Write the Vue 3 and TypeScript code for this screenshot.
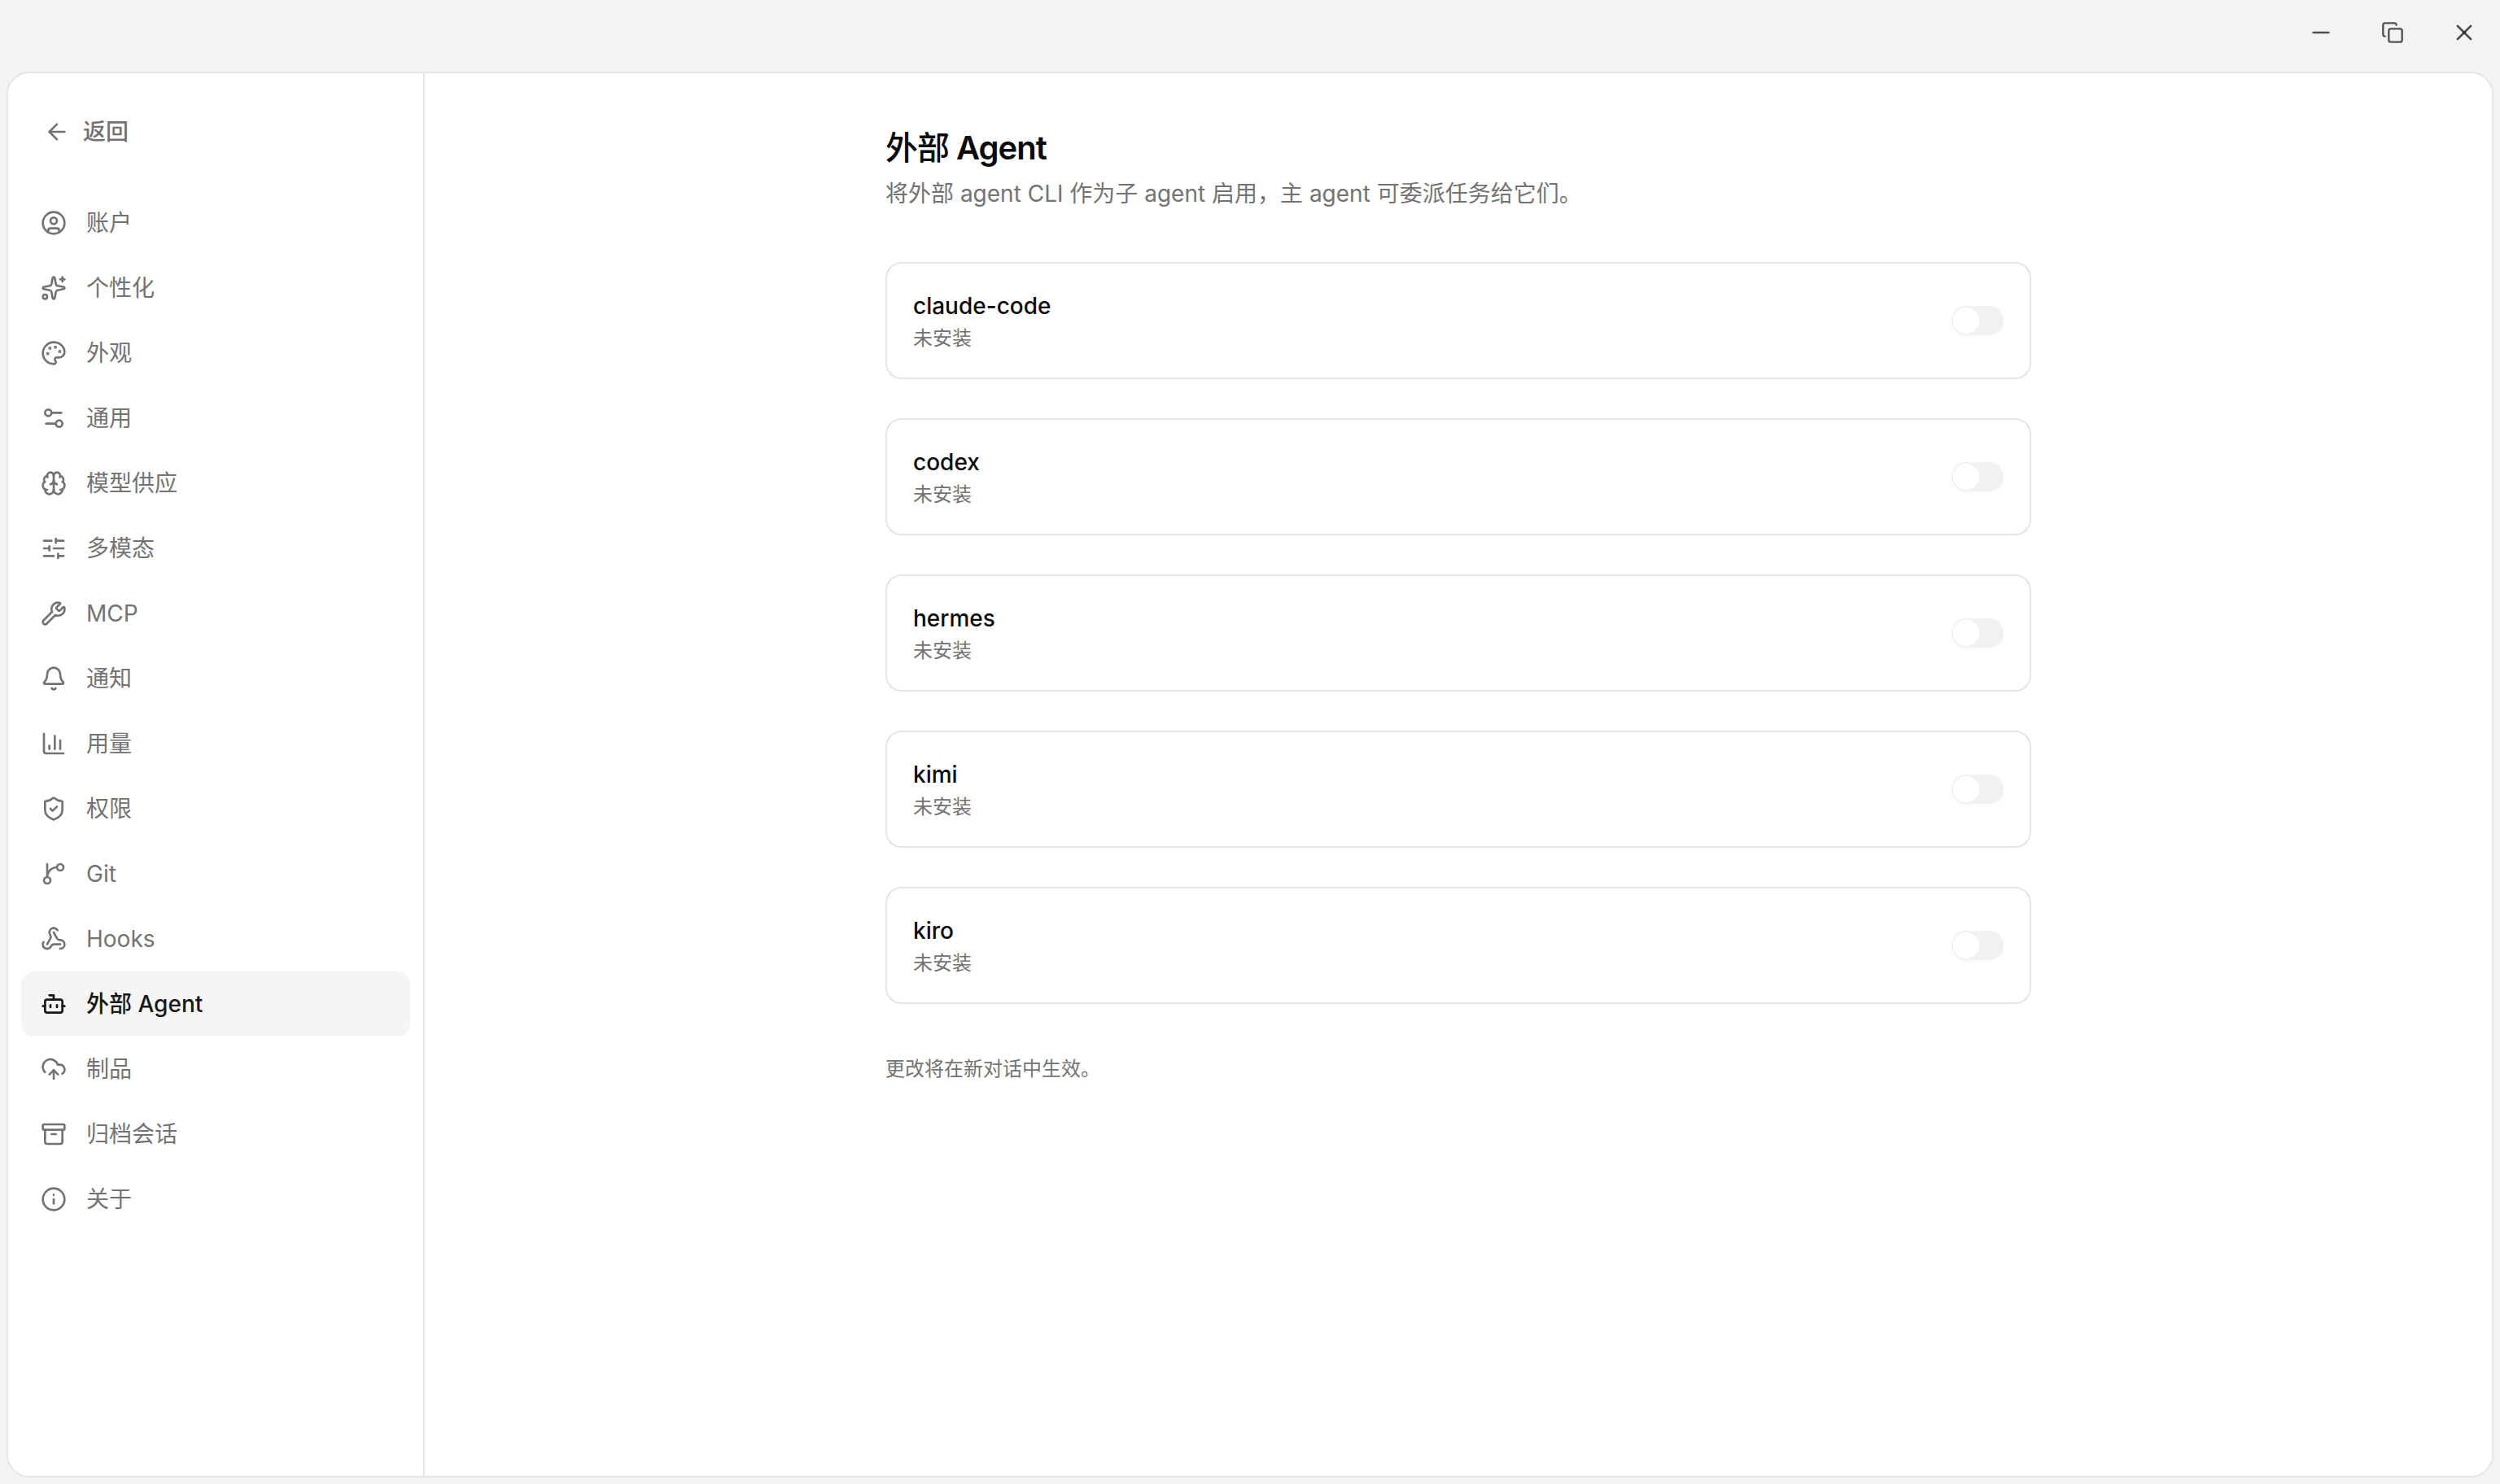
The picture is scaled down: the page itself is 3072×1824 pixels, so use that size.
<script setup lang="ts">
interface NavItem {
  label: string
  icon: string
  active?: boolean
}

const nav: NavItem[] = [
  {
    label: '账户',
    icon: '<circle cx="12" cy="12" r="10"/><circle cx="12" cy="10" r="3"/><path d="M7 20.662V19a2 2 0 0 1 2-2h6a2 2 0 0 1 2 2v1.662"/>',
  },
  {
    label: '个性化',
    icon: '<path d="M11.017 2.814a1 1 0 0 1 1.966 0l1.051 5.558a2 2 0 0 0 1.594 1.594l5.558 1.051a1 1 0 0 1 0 1.966l-5.558 1.051a2 2 0 0 0-1.594 1.594l-1.051 5.558a1 1 0 0 1-1.966 0l-1.051-5.558a2 2 0 0 0-1.594-1.594l-5.558-1.051a1 1 0 0 1 0-1.966l5.558-1.051a2 2 0 0 0 1.594-1.594z"/><path d="M20 2v4"/><path d="M22 4h-4"/><circle cx="4" cy="20" r="2"/>',
  },
  {
    label: '外观',
    icon: '<path d="M12 22a1 1 0 0 1 0-20 10 9 0 0 1 10 9 5 5 0 0 1-5 5h-2.25a1.75 1.75 0 0 0-1.4 2.8l.3.4a1.75 1.75 0 0 1-1.4 2.8z"/><circle cx="13.5" cy="6.5" r=".5" fill="currentColor"/><circle cx="17.5" cy="10.5" r=".5" fill="currentColor"/><circle cx="6.5" cy="12.5" r=".5" fill="currentColor"/><circle cx="8.5" cy="7.5" r=".5" fill="currentColor"/>',
  },
  {
    label: '通用',
    icon: '<path d="M14 17H5"/><path d="M19 7h-9"/><circle cx="17" cy="17" r="3"/><circle cx="7" cy="7" r="3"/>',
  },
  {
    label: '模型供应',
    icon: '<path d="M12 18V5"/><path d="M15 13a4.17 4.17 0 0 1-3-4 4.17 4.17 0 0 1-3 4"/><path d="M17.598 6.5A3 3 0 1 0 12 5a3 3 0 1 0-5.598 1.5"/><path d="M17.997 5.125a4 4 0 0 1 2.526 5.77"/><path d="M18 18a4 4 0 0 0 2-7.464"/><path d="M19.967 17.483A4 4 0 1 1 12 18a4 4 0 1 1-7.967-.517"/><path d="M6 18a4 4 0 0 1-2-7.464"/><path d="M6.003 5.125a4 4 0 0 0-2.526 5.77"/>',
  },
  {
    label: '多模态',
    icon: '<path d="M10 5H3"/><path d="M12 19H3"/><path d="M14 3v4"/><path d="M16 17v4"/><path d="M21 12h-9"/><path d="M21 19h-5"/><path d="M21 5h-7"/><path d="M8 10v4"/><path d="M8 12H3"/>',
  },
  {
    label: 'MCP',
    icon: '<path d="M14.7 6.3a1 1 0 0 0 0 1.4l1.6 1.6a1 1 0 0 0 1.4 0l3.106-3.105c.32-.322.863-.22.983.218a6 6 0 0 1-8.259 7.057l-7.91 7.91a1 1 0 0 1-2.999-3l7.91-7.91a6 6 0 0 1 7.057-8.259c.438.12.54.662.219.984z"/>',
  },
  {
    label: '通知',
    icon: '<path d="M10.268 21a2 2 0 0 0 3.464 0"/><path d="M3.262 15.326A1 1 0 0 0 4 17h16a1 1 0 0 0 .74-1.673C19.41 13.956 18 12.499 18 8A6 6 0 0 0 6 8c0 4.499-1.411 5.956-2.738 7.326"/>',
  },
  {
    label: '用量',
    icon: '<path d="M3 3v16a2 2 0 0 0 2 2h16"/><path d="M18 17V9"/><path d="M13 17V5"/><path d="M8 17v-3"/>',
  },
  {
    label: '权限',
    icon: '<path d="M20 13c0 5-3.5 7.5-7.66 8.95a1 1 0 0 1-.67-.01C7.5 20.5 4 18 4 13V6a1 1 0 0 1 1-1c2 0 4.5-1.2 6.24-2.72a1.17 1.17 0 0 1 1.52 0C14.51 3.81 17 5 19 5a1 1 0 0 1 1 1z"/><path d="m9 12 2 2 4-4"/>',
  },
  {
    label: 'Git',
    icon: '<path d="M15 6a9 9 0 0 0-9 9V3"/><circle cx="18" cy="6" r="3"/><circle cx="6" cy="18" r="3"/>',
  },
  {
    label: 'Hooks',
    icon: '<path d="M18 16.98h-5.99c-1.1 0-1.95.94-2.48 1.9A4 4 0 0 1 2 17c.01-.7.2-1.4.57-2"/><path d="m6 17 3.13-5.78c.53-.97.1-2.18-.5-3.1a4 4 0 1 1 6.89-4.06"/><path d="m12 6 3.13 5.73C15.66 12.7 16.9 13 18 13a4 4 0 0 1 0 8"/>',
  },
  {
    label: '外部 Agent',
    active: true,
    icon: '<path d="M12 8V4H8"/><rect width="16" height="12" x="4" y="8" rx="2"/><path d="M2 14h2"/><path d="M20 14h2"/><path d="M15 13v2"/><path d="M9 13v2"/>',
  },
  {
    label: '制品',
    icon: '<path d="M12 13v8"/><path d="M4 14.899A7 7 0 1 1 15.71 8h1.79a4.5 4.5 0 0 1 2.5 8.242"/><path d="m8 17 4-4 4 4"/>',
  },
  {
    label: '归档会话',
    icon: '<rect width="20" height="5" x="2" y="3" rx="1"/><path d="M4 8v11a2 2 0 0 0 2 2h12a2 2 0 0 0 2-2V8"/><path d="M10 12h4"/>',
  },
  {
    label: '关于',
    icon: '<circle cx="12" cy="12" r="10"/><path d="M12 16v-4"/><path d="M12 8h.01"/>',
  },
]

const agents: string[] = ['claude-code', 'codex', 'hermes', 'kimi', 'kiro']
</script>

<template>
  <div class="window">
    <header class="titlebar">
      <button class="win-btn" aria-label="最小化">
        <svg class="icon" viewBox="0 0 24 24"><path d="M5 12h14" /></svg>
      </button>
      <button class="win-btn" aria-label="还原">
        <svg class="icon small" viewBox="0 0 24 24">
          <rect width="14" height="14" x="8" y="8" rx="2" />
          <path d="M4 16c-1.1 0-2-.9-2-2V4c0-1.1.9-2 2-2h10c1.1 0 2 .9 2 2" />
        </svg>
      </button>
      <button class="win-btn" aria-label="关闭">
        <svg class="icon" viewBox="0 0 24 24"><path d="M18 6 6 18" /><path d="m6 6 12 12" /></svg>
      </button>
    </header>

    <div class="panel">
      <aside class="sidebar">
        <button class="back">
          <svg class="icon" viewBox="0 0 24 24"><path d="m12 19-7-7 7-7" /><path d="M19 12H5" /></svg>
          <span>返回</span>
        </button>
        <nav class="nav">
          <a v-for="item in nav" :key="item.label" class="nav-item" :class="{ active: item.active }">
            <svg class="icon" viewBox="0 0 24 24" v-html="item.icon"></svg>
            <span>{{ item.label }}</span>
          </a>
        </nav>
      </aside>

      <main class="content">
        <div class="column">
          <div class="heading">
            <h1><span class="cjk">外部</span> Agent</h1>
            <p>将外部 agent CLI 作为子 agent 启用，主 agent 可委派任务给它们。</p>
          </div>
          <section v-for="name in agents" :key="name" class="card">
            <div class="info">
              <div class="name">{{ name }}</div>
              <div class="status">未安装</div>
            </div>
            <div class="switch"><div class="thumb"></div></div>
          </section>
          <p class="note">更改将在新对话中生效。</p>
        </div>
      </main>
    </div>
  </div>
</template>

<style>
body {
  margin: 0;
  background: #f2f3f5;
}
</style>

<style scoped>
.window {
  box-sizing: border-box;
  width: 100vw;
  height: 100vh;
  padding: 0 8px 8px;
  display: flex;
  flex-direction: column;
  background: #f2f3f5;
  color: #0a0a0a;
  font-family: Inter, 'Noto Sans CJK SC', sans-serif;
  font-size: 28px;
  line-height: 40px;
}

button {
  border: 0;
  padding: 0;
  background: none;
  font: inherit;
  color: inherit;
}

.icon {
  width: 32px;
  height: 32px;
  flex: none;
  fill: none;
  stroke: currentColor;
  stroke-width: 2;
  stroke-linecap: round;
  stroke-linejoin: round;
}

.icon.small {
  width: 28px;
  height: 28px;
}

.titlebar {
  height: 88px;
  flex: none;
  display: flex;
  justify-content: flex-end;
}

.win-btn {
  width: 88px;
  height: 80px;
  display: flex;
  align-items: center;
  justify-content: center;
  color: rgba(10, 10, 10, 0.7);
}

.win-btn:last-child {
  width: 72px;
  margin-left: 8px;
}

.panel {
  flex: 1;
  min-height: 0;
  display: flex;
  overflow: hidden;
  border: 2px solid #e5e5e5;
  border-radius: 28px;
  background: #fff;
}

.sidebar {
  box-sizing: border-box;
  width: 512px;
  flex: none;
  padding: 40px 16px 0;
  border-right: 2px solid #e5e5e5;
  color: #737373;
}

.back {
  height: 64px;
  margin-left: 28px;
  display: flex;
  align-items: center;
  gap: 16px;
  font-weight: 500;
}

.nav {
  margin-top: 40px;
  display: flex;
  flex-direction: column;
}

.nav-item {
  height: 80px;
  padding: 0 24px;
  display: flex;
  align-items: center;
  gap: 24px;
  border-radius: 16px;
}

.nav-item.active {
  background: #f5f5f5;
  color: #171717;
  font-weight: 500;
}

.content {
  flex: 1;
  display: flex;
  justify-content: center;
}

.column {
  width: 1408px;
  padding-top: 64px;
  display: flex;
  flex-direction: column;
  gap: 48px;
}

.heading {
  margin-bottom: 16px;
  display: flex;
  flex-direction: column;
  gap: 8px;
}

h1,
p {
  margin: 0;
}

h1 {
  font-size: 40px;
  line-height: 56px;
  font-weight: 600;
  letter-spacing: -0.025em;
}

.cjk {
  font-weight: 500;
}

.heading p {
  color: #737373;
}

.card {
  box-sizing: border-box;
  height: 144px;
  padding: 0 32px;
  display: flex;
  align-items: center;
  justify-content: space-between;
  border: 2px solid #e5e5e5;
  border-radius: 20px;
}

.name {
  font-weight: 500;
}

.status {
  margin-top: 4px;
  font-size: 24px;
  line-height: 32px;
  color: #737373;
}

.switch {
  box-sizing: border-box;
  width: 64px;
  height: 36px;
  padding: 2px;
  border-radius: 18px;
  background: #f1f1f1;
  box-shadow: 0 2px 4px rgba(0, 0, 0, 0.025);
}

.thumb {
  width: 32px;
  height: 32px;
  border-radius: 50%;
  background: #fff;
}

.note {
  margin-top: 16px;
  font-size: 24px;
  line-height: 32px;
  color: #737373;
}
</style>
